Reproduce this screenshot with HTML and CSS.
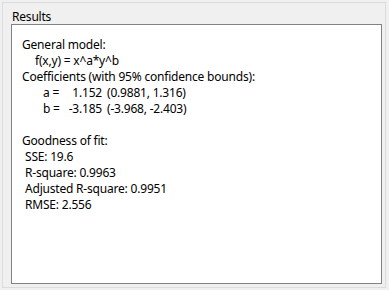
FILE: index.html
```html
<!DOCTYPE html>
<html lang="en">
<head>
  <meta charset="UTF-8">
  <meta name="viewport" content="width=device-width, initial-scale=1.0">
  <title>Results</title>
  <link rel="stylesheet" href="styles.css">
</head>
<body>

<div class="group">
  <div class="group-title">Results</div>
  <div class="results-box">
    <div class="line">General model:</div>
    <div class="line indent-model">f(x,y) = x^a*y^b</div>
    <div class="line">Coefficients (with 95% confidence bounds):</div>
    <div class="line coef">
      <span class="coef-name">a =</span>
      <span class="coef-val">1.152</span>
      <span class="coef-bounds">(0.9881, 1.316)</span>
    </div>
    <div class="line coef">
      <span class="coef-name">b =</span>
      <span class="coef-val">-3.185</span>
      <span class="coef-bounds">(-3.968, -2.403)</span>
    </div>
    <div class="line blank"></div>
    <div class="line">Goodness of fit:</div>
    <div class="line indent-stat">SSE: 19.6</div>
    <div class="line indent-stat">R-square: 0.9963</div>
    <div class="line indent-stat">Adjusted R-square: 0.9951</div>
    <div class="line indent-stat">RMSE: 2.556</div>
  </div>
</div>

</body>
</html>
```

FILE: styles.css
```css
body {
  font-family: "Noto Sans", "Open Sans", sans-serif;
  font-size: 12px;
  letter-spacing: -0.2px;
  color: #000000;
  margin: 0;
  padding: 0;
  background-color: #f0f0f0;
}

/* Group panel */
.group {
  margin: 2px 0 0 2px;
  width: 384px;
  height: 286px;
  box-sizing: border-box;
  border: 1px solid #dcdcdc;
  padding: 7px 3px 3px 8px;
  display: flex;
  flex-direction: column;
}

.group-title {
  line-height: 14px;
  padding-left: 1px;
}

/* Results text box */
.results-box {
  flex: 1;
  background: #ffffff;
  border: 1px solid #828282;
  padding: 12px 10px 0 10px;
}

.line {
  line-height: 16px;
  height: 16px;
  white-space: nowrap;
}

.indent-model {
  padding-left: 13px;
}

.indent-stat {
  padding-left: 3px;
}

.coef {
  display: flex;
  padding-left: 21px;
}

.coef-name {
  width: 20px;
}

.coef-val {
  width: 39px;
  text-align: right;
}

.coef-bounds {
  margin-left: 5px;
}
```
